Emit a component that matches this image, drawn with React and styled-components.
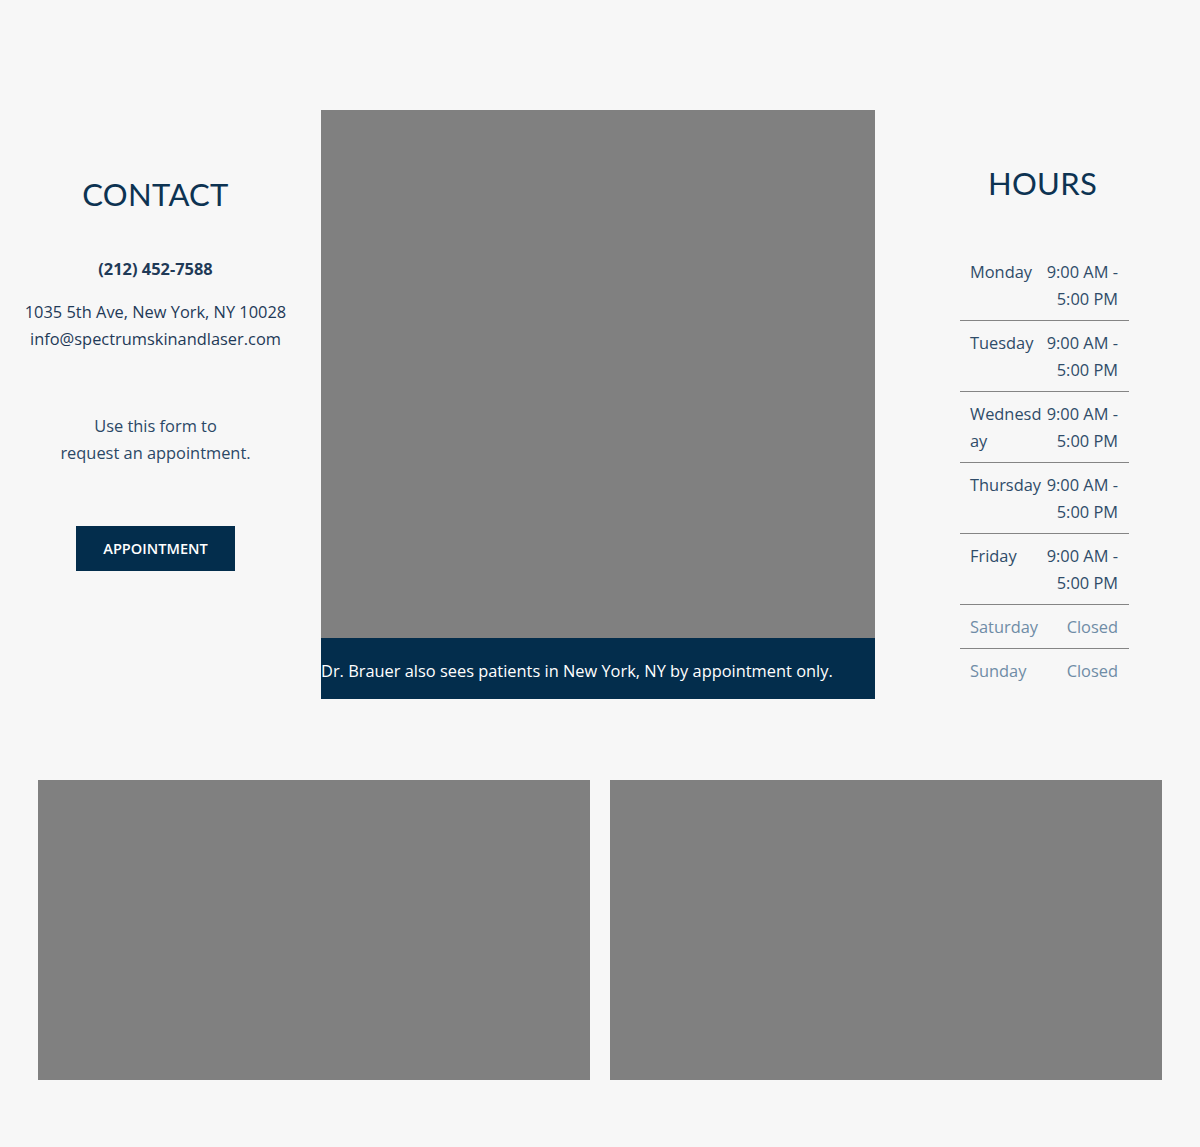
import React from 'react';
import styled, { createGlobalStyle } from 'styled-components';

const GlobalStyle = createGlobalStyle`
  * { box-sizing: border-box; }
  body {
    margin: 0;
    background: #f7f7f7;
    font-family: "Open Sans", "Liberation Sans", sans-serif;
    color: #2b4866;
  }
`;

const Page = styled.div`
  padding: 110px 0 67px;
`;

const TopSection = styled.section`
  display: grid;
  grid-template-columns: 311px 554px 1fr;
  column-gap: 10px;
  align-items: start;
`;

const Column = styled.div`
  display: flex;
  flex-direction: column;
  align-items: center;
  text-align: center;
  padding-top: ${props => props.top}px;
`;

const Heading = styled.h2`
  margin: 0;
  font-family: "Lato", "Liberation Sans", sans-serif;
  font-weight: 400;
  font-size: 31px;
  line-height: 36px;
  letter-spacing: 0.3px;
  color: #0d3352;
`;

const Phone = styled.div`
  margin-top: 43px;
  font-size: 16.4px;
  line-height: 27px;
  font-weight: 700;
  color: #1f3a57;
`;

const TextBlock = styled.p`
  margin: ${props => props.mt}px 0 0;
  font-size: 16.4px;
  line-height: 27px;
  color: ${props => props.color || '#2b4866'};
`;

const Button = styled.a`
  display: inline-flex;
  align-items: center;
  justify-content: center;
  margin-top: 60px;
  padding-bottom: 2px;
  width: 159px;
  height: 45px;
  background: #032d4c;
  color: #fff;
  font-size: 14.6px;
  font-weight: 600;
  text-transform: uppercase;
  text-decoration: none;
`;

const Media = styled.div`
  display: flex;
  flex-direction: column;
`;

const Placeholder = styled.div`
  background: #808080;
  height: ${props => props.h}px;
`;

const Caption = styled.div`
  background: #032d4c;
  color: #fff;
  font-size: 16.4px;
  line-height: 27px;
  padding: 19px 0 15px;
  text-align: left;
  white-space: nowrap;
`;

const HoursTable = styled.div`
  margin: 49px 0 0 4px;
  width: 169px;
  display: flex;
  flex-direction: column;
  text-align: left;
`;

const HoursRow = styled.div`
  display: grid;
  grid-template-columns: 83px 86px;
  padding: 8px 0;
  border-bottom: ${props => (props.last ? 'none' : '1px solid #858585')};
  font-size: 16.4px;
  line-height: 27px;
  color: ${props => (props.closed ? '#6f8ca6' : '#2f4c69')};
`;

const Day = styled.span`
  padding-left: 10px;
  overflow-wrap: anywhere;
`;

const Time = styled.span`
  padding-right: 11px;
  text-align: right;
`;

const BottomSection = styled.section`
  display: grid;
  grid-template-columns: 1fr 1fr;
  gap: 20px;
  margin: 81px 38px 0;
`;

const hours = [
  { day: 'Monday', time: '9:00 AM - 5:00 PM' },
  { day: 'Tuesday', time: '9:00 AM - 5:00 PM' },
  { day: 'Wednesday', time: '9:00 AM - 5:00 PM' },
  { day: 'Thursday', time: '9:00 AM - 5:00 PM' },
  { day: 'Friday', time: '9:00 AM - 5:00 PM' },
  { day: 'Saturday', time: 'Closed', closed: true },
  { day: 'Sunday', time: 'Closed', closed: true },
];

const App = () => {
  return (
    <Page>
      <GlobalStyle />
      <TopSection>
        <Column top={66}>
          <Heading>CONTACT</Heading>
          <Phone>(212) 452-7588</Phone>
          <TextBlock mt={16} color="#1f3a57">
            1035 5th Ave, New York, NY 10028
            <br />
            info@spectrumskinandlaser.com
          </TextBlock>
          <TextBlock mt={60}>
            Use this form to
            <br />
            request an appointment.
          </TextBlock>
          <Button href="#">Appointment</Button>
        </Column>
        <Media>
          <Placeholder h={528} />
          <Caption>Dr. Brauer also sees patients in New York, NY by appointment only.</Caption>
        </Media>
        <Column top={55}>
          <Heading>HOURS</Heading>
          <HoursTable>
            {hours.map((h, i) => (
              <HoursRow key={h.day} closed={h.closed} last={i === hours.length - 1}>
                <Day>{h.day}</Day>
                <Time>{h.time}</Time>
              </HoursRow>
            ))}
          </HoursTable>
        </Column>
      </TopSection>
      <BottomSection>
        <Placeholder h={300} />
        <Placeholder h={300} />
      </BottomSection>
    </Page>
  );
};

export default App;
